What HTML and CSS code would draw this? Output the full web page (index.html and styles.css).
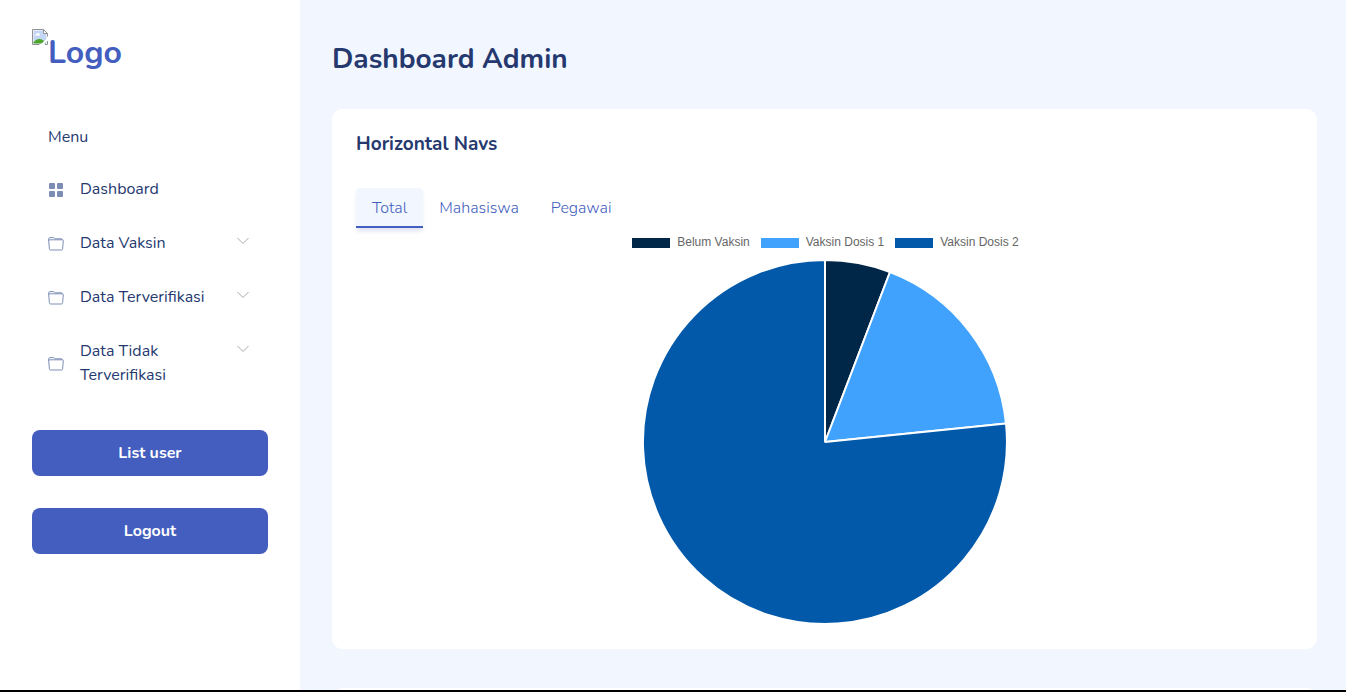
FILE: index.html
```html
<!DOCTYPE html>
<html lang="id">
<head>
<meta charset="utf-8">
<meta name="viewport" content="width=device-width, initial-scale=1">
<title>Dashboard Admin</title>
<link rel="stylesheet" href="styles.css">
</head>
<body>
<svg class="symbols" aria-hidden="true">
  <symbol id="folder" viewBox="0 0 16 16">
    <path d="M.7 4.700c0-.5.4-.9.9-.9h12.800c.5 0 .9.4.9.9l-.7 8.100c-.1.7-.5 1.200-1.200 1.200H2.600c-.7 0-1.100-.5-1.200-1.200L.7 4.700V2.800c0-.7.5-1.200 1.200-1.200h3.300c.5 0 .8.2 1.100.5l.8.7h6c.7 0 1.200.3 1.300 1" fill="none" stroke="currentColor"/>
  </symbol>
  <symbol id="chevron" viewBox="0 0 14 8">
    <path d="M1.500 1 7 6.500 12.500 1" fill="none" stroke="currentColor"/>
  </symbol>
</svg>
<div class="app">
  <aside class="sidebar">
    <a class="logo" href="#">
      <svg class="logo-icon" viewBox="0 0 16 16" aria-hidden="true">
        <path d="M.5.5h11l4 4v11H.5z" fill="#fff"/>
        <path d="M1.500 1.500h9.500v3.500h3.500v9.500h-13z" fill="#c3d6f5"/>
        <path d="M3 6.500c0-1.500 1.500-1.500 1.500-1.500s.5-1.500 2-1 1.500 2.500 1.500 2.500z" fill="#fff"/>
        <path d="M1.500 14.500v-1.500c2-2 4-3.500 6.500-3 2 .3 3.500 1 6 4.500z" fill="#4ea72c"/>
        <path d="M15.500 7.500V4.500l-4-4H.5v15h7M11.500.5v4h4M13 15.500h2.500V12" fill="none" stroke="#929292"/>
        <path d="M8 16 16 8.500v2.500L11 16z" fill="#fff"/>
      </svg><span>Logo</span>
    </a>
    <nav class="menu">
      <p class="menu-title">Menu</p>
      <a class="menu-link" href="#">
        <svg class="menu-icon" viewBox="0 0 16 16" aria-hidden="true"><g fill="currentColor"><rect x="1" y="1" width="6" height="6" rx="1"/><rect x="9" y="1" width="6" height="6" rx="1"/><rect x="1" y="9" width="6" height="6" rx="1"/><rect x="9" y="9" width="6" height="6" rx="1"/></g></svg>
        <span class="menu-text">Dashboard</span>
      </a>
      <a class="menu-link" href="#">
        <svg class="menu-icon" aria-hidden="true"><use href="#folder"/></svg>
        <span class="menu-text">Data Vaksin</span>
        <svg class="chevron" aria-hidden="true"><use href="#chevron"/></svg>
      </a>
      <a class="menu-link" href="#">
        <svg class="menu-icon" aria-hidden="true"><use href="#folder"/></svg>
        <span class="menu-text">Data Terverifikasi</span>
        <svg class="chevron" aria-hidden="true"><use href="#chevron"/></svg>
      </a>
      <a class="menu-link" href="#">
        <svg class="menu-icon" aria-hidden="true"><use href="#folder"/></svg>
        <span class="menu-text">Data Tidak Terverifikasi</span>
        <svg class="chevron" aria-hidden="true"><use href="#chevron"/></svg>
      </a>
    </nav>
    <div class="actions">
      <button class="btn" type="button">List user</button>
      <button class="btn" type="button">Logout</button>
    </div>
  </aside>
  <main class="main">
    <h1 class="page-title">Dashboard Admin</h1>
    <section class="card">
      <h2 class="card-title">Horizontal Navs</h2>
      <nav class="tabs">
        <a class="tab active" href="#">Total</a>
        <a class="tab" href="#">Mahasiswa</a>
        <a class="tab" href="#">Pegawai</a>
      </nav>
      <div class="chart">
        <ul class="legend">
          <li class="legend-item"><span class="swatch navy"></span>Belum Vaksin</li>
          <li class="legend-item"><span class="swatch sky"></span>Vaksin Dosis 1</li>
          <li class="legend-item"><span class="swatch blue"></span>Vaksin Dosis 2</li>
        </ul>
        <svg class="pie" viewBox="-182 -182 364 364" role="img" aria-label="Vaksin">
          <g stroke="#fff" stroke-width="2" stroke-linejoin="bevel">
            <path fill="#002748" d="M0 0V-182A182 182 0 0 1 65-170z"/>
            <path fill="#40a2fd" d="M0 0 65-170A182 182 0 0 1 181-18.500z"/>
            <path fill="#0259a9" d="M0 0 181-18.500A182 182 0 1 1 0-182z"/>
          </g>
        </svg>
      </div>
    </section>
    <section class="card"></section>
  </main>
</div>
</body>
</html>
```
FILE: styles.css
```css
* { box-sizing: border-box; }
body {
  margin: 0;
  height: 100vh;
  overflow: hidden;
  border-bottom: 2px solid #000;
  background: #f2f7ff;
  color: #25396f;
  font: 16px/24px Nunito, "Noto Sans", sans-serif;
}
a { color: inherit; text-decoration: none; }
.symbols { display: none; }
.app { display: flex; height: 100%; overflow: hidden; }
.sidebar { flex: 0 0 300px; padding: 29px 32px; background: #fff; }
.logo {
  display: flex;
  align-items: flex-start;
  height: 48px;
  color: #435ebe;
  font-size: 32px;
  font-weight: 700;
  line-height: 48px;
}
.logo-icon { width: 16px; height: 16px; }
.menu { display: flex; flex-direction: column; gap: 6px; margin-top: 48px; }
.menu-title { margin: 0 16px 10px; }
.menu-link { display: flex; align-items: center; padding: 12px 16px; }
.menu-icon { flex: none; width: 16px; height: 16px; margin: 2px 16px 0 0; color: #7c8db5; }
.menu-text { flex: 1; }
.chevron { flex: none; align-self: flex-start; width: 14px; height: 8px; margin: 6px 2px 0 12px; color: #aaa; }
.actions { display: grid; gap: 32px; margin-top: 31px; }
.btn {
  height: 46px;
  border: 0;
  border-radius: 8px;
  background: #435ebe;
  color: #fff;
  font: inherit;
  font-weight: 700;
}
.main { flex: 1; padding: 32px 29px 0 32px; overflow: hidden; }
.page-title { margin: 9px 0 31px; font-size: 28px; font-weight: 700; line-height: 37px; }
.card { min-height: 100px; margin-bottom: 39px; padding: 24px 24px 25px; border-radius: 11px; background: #fff; }
.card-title { margin: 0 0 32px; font-size: 19px; font-weight: 700; line-height: 23px; }
.tabs { display: flex; }
.tab { padding: 8px 16px; color: #435ebe; font-weight: 300; }
.tab.active {
  border-bottom: 2px solid #435ebe;
  border-radius: 4px 4px 0 0;
  background: #f2f7ff;
  box-shadow: 0 4px 4px -1px rgba(67, 94, 190, .18);
  padding-bottom: 6px;
}
.legend {
  display: flex;
  justify-content: center;
  gap: 11px;
  margin: 0 0 4px;
  padding: 7px 0 7px 2px;
  list-style: none;
  color: #666;
  font: 12px/14px "Liberation Sans", Arial, sans-serif;
}
.legend-item { display: flex; align-items: center; gap: 7px; }
.swatch { width: 38px; height: 10px; margin-top: 2px; }
.navy { background: #002748; }
.sky { background: #40a2fd; }
.blue { background: #0259a9; }
.pie { display: block; width: 364px; margin: 0 auto; }
```
